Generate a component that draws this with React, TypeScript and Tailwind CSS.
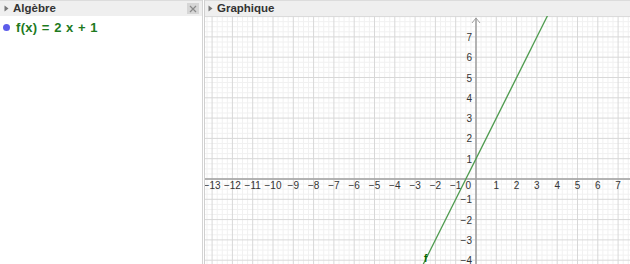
import React from "react";

const U = 20.3;
const OX = 271;
const OY = 163;
const W = 425;
const H = 248;

function Triangle() {
  return (
    <svg width="5" height="7" viewBox="0 0 5 7" className="shrink-0">
      <path d="M0.5 0.5 L4.5 3.5 L0.5 6.5 Z" fill="#777" />
    </svg>
  );
}

function Graph() {
  const minor: number[] = [];
  const majorX: number[] = [];
  const majorY: number[] = [];
  for (let i = -60; i <= 40; i++) {
    const x = OX + (i * U) / 4;
    if (x >= 0 && x <= W) (i % 4 === 0 ? majorX : minor).push(x);
  }
  const minorY: number[] = [];
  for (let i = -40; i <= 40; i++) {
    const y = OY + (i * U) / 4;
    if (y >= 0 && y <= H) (i % 4 === 0 ? majorY : minorY).push(y);
  }
  const xs = [-13, -12, -11, -10, -9, -8, -7, -6, -5, -4, -3, -2, -1, 1, 2, 3, 4, 5, 6, 7];
  const ys = [7, 6, 5, 4, 3, 2, 1, -1, -2, -3, -4];
  // y = 2x + 1
  const px = (x: number) => OX + x * U;
  const py = (y: number) => OY - y * U;
  const yTop = (OY + 2) / U;
  const yBot = (OY - H - 2) / U;
  return (
    <svg width={W} height={H} className="block">
      <rect width={W} height={H} fill="#fff" />
      {minor.map((x) => (
        <line key={"mx" + x} x1={x} y1={0} x2={x} y2={H} stroke="#f1f1f1" strokeWidth="1" />
      ))}
      {minorY.map((y) => (
        <line key={"my" + y} x1={0} y1={y} x2={W} y2={y} stroke="#f1f1f1" strokeWidth="1" />
      ))}
      {majorX.map((x) => (
        <line key={"Mx" + x} x1={x} y1={0} x2={x} y2={H} stroke="#d8d8d8" strokeWidth="1" />
      ))}
      {majorY.map((y) => (
        <line key={"My" + y} x1={0} y1={y} x2={W} y2={y} stroke="#d8d8d8" strokeWidth="1" />
      ))}
      <line x1={0} y1={OY} x2={W} y2={OY} stroke="#a0a0a0" strokeWidth="1.5" />
      <line x1={OX} y1={2} x2={OX} y2={H} stroke="#a0a0a0" strokeWidth="1.5" />
      <path d={`M${OX - 4} 7 L${OX} 2 L${OX + 4} 7`} fill="none" stroke="#a0a0a0" strokeWidth="1" />
      <g fontFamily="'Liberation Sans', Arial, sans-serif" fontSize="10" fill="#333">
        {xs.map((v) => (
          <text key={"lx" + v} x={px(v)} y={OY + 10} textAnchor="middle">
            {v < 0 ? "\u2212" + -v : v}
          </text>
        ))}
        {ys.map((v) => (
          <text key={"ly" + v} x={OX - 4} y={py(v) + 4} textAnchor="end">
            {v < 0 ? "\u2212" + -v : v}
          </text>
        ))}
        <text x={OX - 5} y={OY + 10} textAnchor="end">0</text>
      </g>
      <line
        x1={px((yBot - 1) / 2)}
        y1={py(yBot)}
        x2={px((yTop - 1) / 2)}
        y2={py(yTop)}
        stroke="#4f9c4f"
        strokeWidth="1.3"
      />
      <text x={219} y={246} fontFamily="'Liberation Sans', Arial, sans-serif" fontSize="10" fontWeight="bold" fill="#006400">
        f
      </text>
    </svg>
  );
}

export default function App() {
  return (
    <div className="flex w-[630px] h-[264px] overflow-hidden bg-white font-['Liberation_Sans',Arial,sans-serif]">
      <div className="w-[203px] shrink-0 flex flex-col border-r border-[#d4d4d4]">
        <div className="h-4 bg-[#efefef] border-t border-[#dcdcdc] flex items-center pl-[4px] pr-[3px] gap-[4px]">
          <Triangle />
          <span className="text-[11.5px] font-bold text-[#333] leading-none">Algèbre</span>
          <div className="ml-auto w-[12px] h-[11px] bg-[#d6d6d6] flex items-center justify-center">
            <svg width="8" height="8" viewBox="0 0 8 8">
              <path d="M1 1 L7 7 M7 1 L1 7" stroke="#8a8a8a" strokeWidth="1.2" />
            </svg>
          </div>
        </div>
        <div className="flex items-center gap-[6px] pl-[3px] pt-[5px]">
          <span className="w-[7px] h-[7px] rounded-full bg-[#5d5dea]" />
          <span className="text-[13px] font-bold text-[#1e7a1e] leading-none tracking-[0.3px] [word-spacing:0.5px]">
            f(x) = 2 x + 1
          </span>
        </div>
      </div>
      <div className="flex-1 flex flex-col ml-px border-l border-[#cfcfcf]">
        <div className="h-4 bg-[#efefef] border-t border-[#dcdcdc] flex items-center pl-[3px] gap-[4px]">
          <Triangle />
          <span className="text-[11.5px] font-bold text-[#333] leading-none">Graphique</span>
        </div>
        <Graph />
      </div>
    </div>
  );
}
